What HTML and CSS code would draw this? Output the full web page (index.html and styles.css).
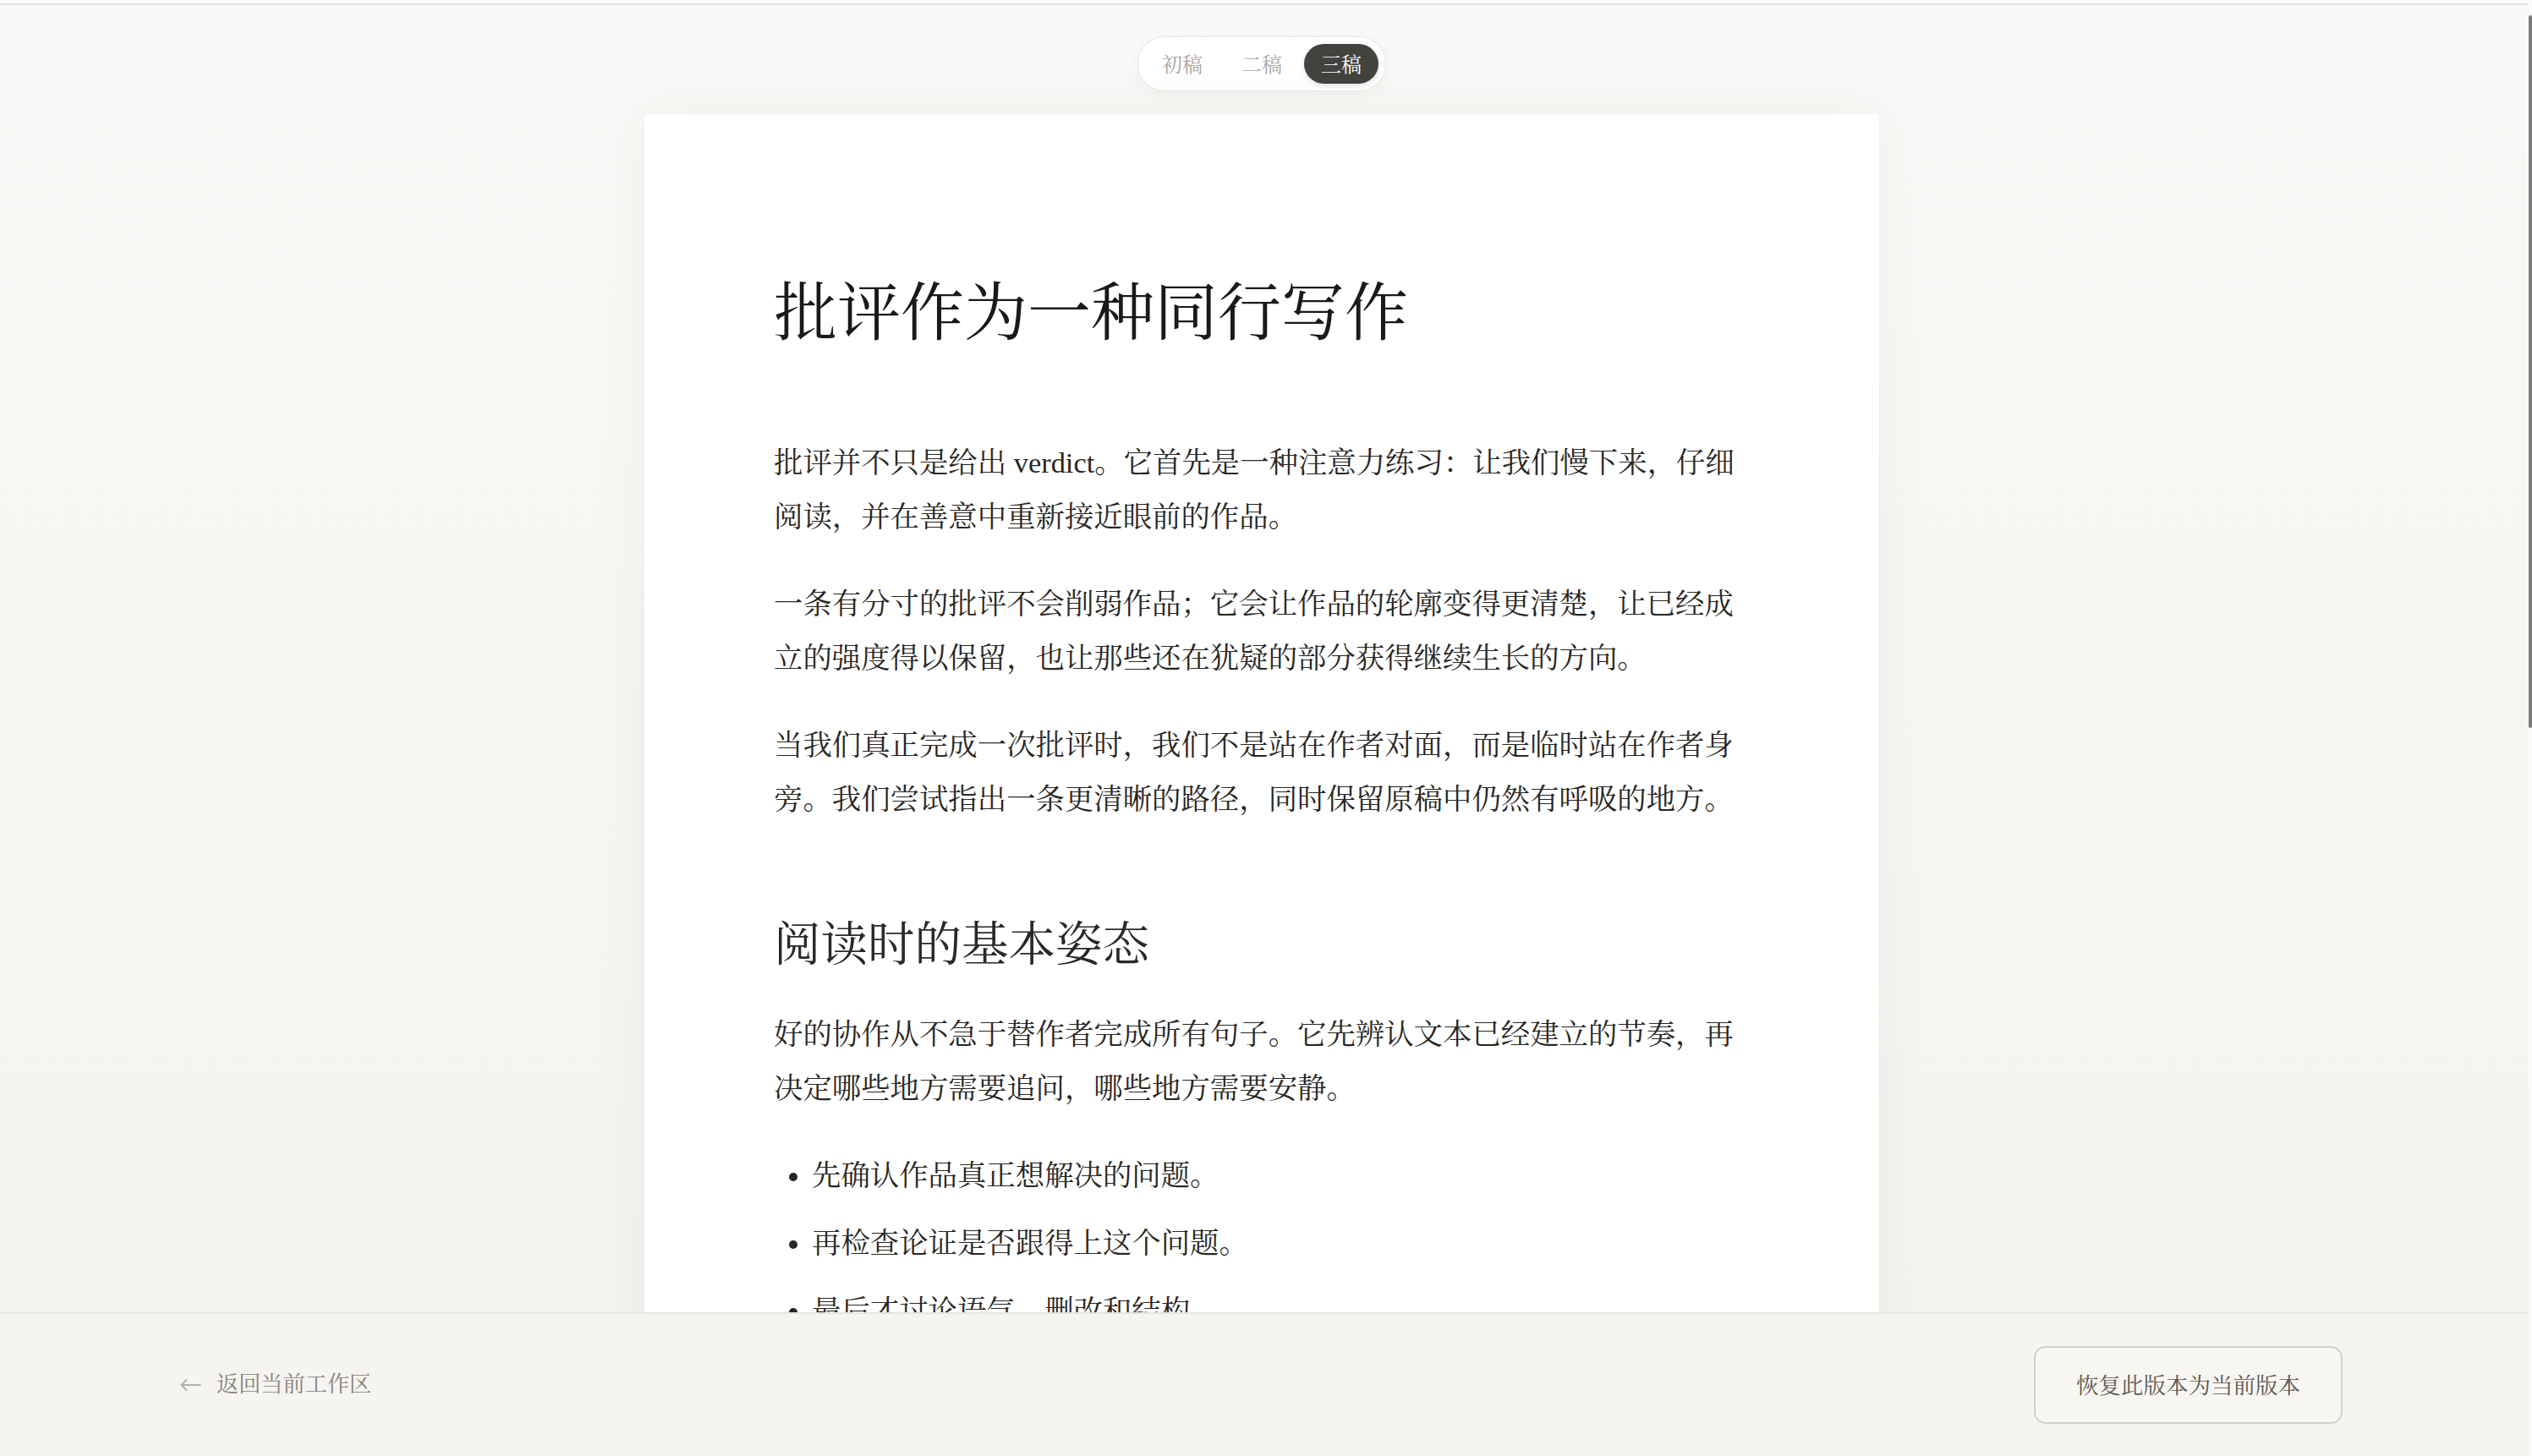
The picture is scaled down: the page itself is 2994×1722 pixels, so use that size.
FILE: index.html
```html
<!DOCTYPE html>
<html lang="zh-CN">
<head>
<meta charset="utf-8">
<title>批评作为一种同行写作</title>
<link rel="stylesheet" href="styles.css">
</head>
<body>
<div class="app">
  <div class="main">
    <div class="topline"></div>
    <div class="scroll">
      <nav class="drafts">
        <button class="draft">初稿</button>
        <button class="draft">二稿</button>
        <button class="draft is-active">三稿</button>
      </nav>
      <article class="sheet">
        <h1 class="title">批评作为一种同行写作</h1>
        <p class="para">批评并不只是给出 verdict。它首先是一种注意力练习：让我们慢下来，仔细阅读，并在善意中重新接近眼前的作品。</p>
        <p class="para">一条有分寸的批评不会削弱作品；它会让作品的轮廓变得更清楚，让已经成立的强度得以保留，也让那些还在犹疑的部分获得继续生长的方向。</p>
        <p class="para">当我们真正完成一次批评时，我们不是站在作者对面，而是临时站在作者身旁。我们尝试指出一条更清晰的路径，同时保留原稿中仍然有呼吸的地方。</p>
        <h2 class="subtitle">阅读时的基本姿态</h2>
        <p class="para">好的协作从不急于替作者完成所有句子。它先辨认文本已经建立的节奏，再决定哪些地方需要追问，哪些地方需要安静。</p>
        <ul class="points">
          <li>先确认作品真正想解决的问题。</li>
          <li>再检查论证是否跟得上这个问题。</li>
          <li>最后才讨论语气、删改和结构。</li>
        </ul>
      </article>
    </div>
    <footer class="bar">
      <a class="back" href="#">
        <svg class="back-icon" width="26" height="16" viewBox="0 0 26 16" aria-hidden="true">
          <path d="M25 8H2.5M8.5 2L2.5 8L8.5 14" fill="none" stroke="currentColor" stroke-width="1.8" stroke-linecap="round" stroke-linejoin="round"/>
        </svg>
        <span>返回当前工作区</span>
      </a>
      <button class="restore">恢复此版本为当前版本</button>
    </footer>
  </div>
  <div class="track"><div class="thumb"></div></div>
</div>
</body>
</html>
```
FILE: styles.css
```css
html, body {
  margin: 0;
  height: 100%;
  overflow: hidden;
}

body {
  font-family: "Liberation Serif", "Noto Serif CJK SC", "Source Han Serif SC", "Noto Sans CJK SC", serif;
  background: #f7f6f2;
  color: #282623;
}

.app {
  display: flex;
  height: 100vh;
}

.main {
  flex: 1;
  min-width: 0;
  display: flex;
  flex-direction: column;
}

.topline {
  flex: none;
  height: 4px;
  background: #fbfbfa;
  border-bottom: 2px solid #e4e3e0;
}

.scroll {
  flex: 1;
  min-height: 0;
  overflow: hidden;
  display: flex;
  flex-direction: column;
  align-items: center;
  padding-right: 6px;
  background: linear-gradient(180deg, #faf9f7 0%, #f7f6f3 50%, #f4f3ef 100%);
}

/* draft switcher */
.drafts {
  flex: none;
  margin-top: 37px;
  display: flex;
  gap: 6px;
  padding: 8px;
  background: #ffffff;
  border: 1px solid #ebe9e5;
  border-radius: 40px;
  box-shadow: 0 4px 18px rgba(60, 50, 30, 0.05);
}

.draft {
  box-sizing: border-box;
  height: 47px;
  padding: 4px 20px 0;
  border: 0;
  border-radius: 24px;
  background: transparent;
  font-family: inherit;
  font-size: 24px;
  line-height: 43px;
  color: #a9a7a3;
  cursor: pointer;
}

.draft.is-active {
  background: #42423f;
  color: #ffffff;
  box-shadow: 0 2px 6px rgba(0, 0, 0, 0.12);
}

/* sheet */
.sheet {
  flex: none;
  box-sizing: border-box;
  width: 1460px;
  margin-top: 27px;
  padding: 187px 153px 400px;
  background: #ffffff;
  box-shadow: 0 0 60px rgba(70, 60, 40, 0.06), 0 1px 3px rgba(0, 0, 0, 0.03);
}

.title {
  margin: 0 0 95px;
  font-size: 75px;
  line-height: 98px;
  font-weight: 400;
  color: #1c1a17;
}

.para {
  margin: 0 0 39px;
  font-size: 34.4px;
  line-height: 64px;
}

.subtitle {
  margin: 105px 0 37px;
  font-size: 55.5px;
  line-height: 72px;
  font-weight: 400;
  color: #2b2926;
}

.points {
  margin: 0;
  padding-left: 45px;
  font-size: 34.4px;
  line-height: 64px;
}

.points li {
  margin-bottom: 16px;
}

/* footer */
.bar {
  flex: none;
  height: 168px;
  border-top: 2px solid #e6e4df;
  background: #f6f4f0;
  display: flex;
  align-items: center;
  justify-content: space-between;
  padding: 0 220px 0 212px;
}

.back {
  display: flex;
  align-items: center;
  gap: 18px;
  color: #87827c;
  text-decoration: none;
  font-size: 26.2px;
  line-height: 1;
}

.back-icon {
  color: #b3afa9;
  flex: none;
}

.restore {
  box-sizing: border-box;
  height: 92px;
  padding: 0 48px 3px;
  border: 2px solid #d3d0ca;
  border-radius: 14px;
  background: #f8f6f2;
  font-family: inherit;
  font-size: 26.5px;
  color: #5c5852;
  cursor: pointer;
}

/* scroll indicator */
.track {
  flex: none;
  width: 4px;
  background: #fcfcfc;
  padding-top: 18px;
}

.thumb {
  height: 843px;
  background: #7b7b7b;
  border-radius: 3px;
}
```
